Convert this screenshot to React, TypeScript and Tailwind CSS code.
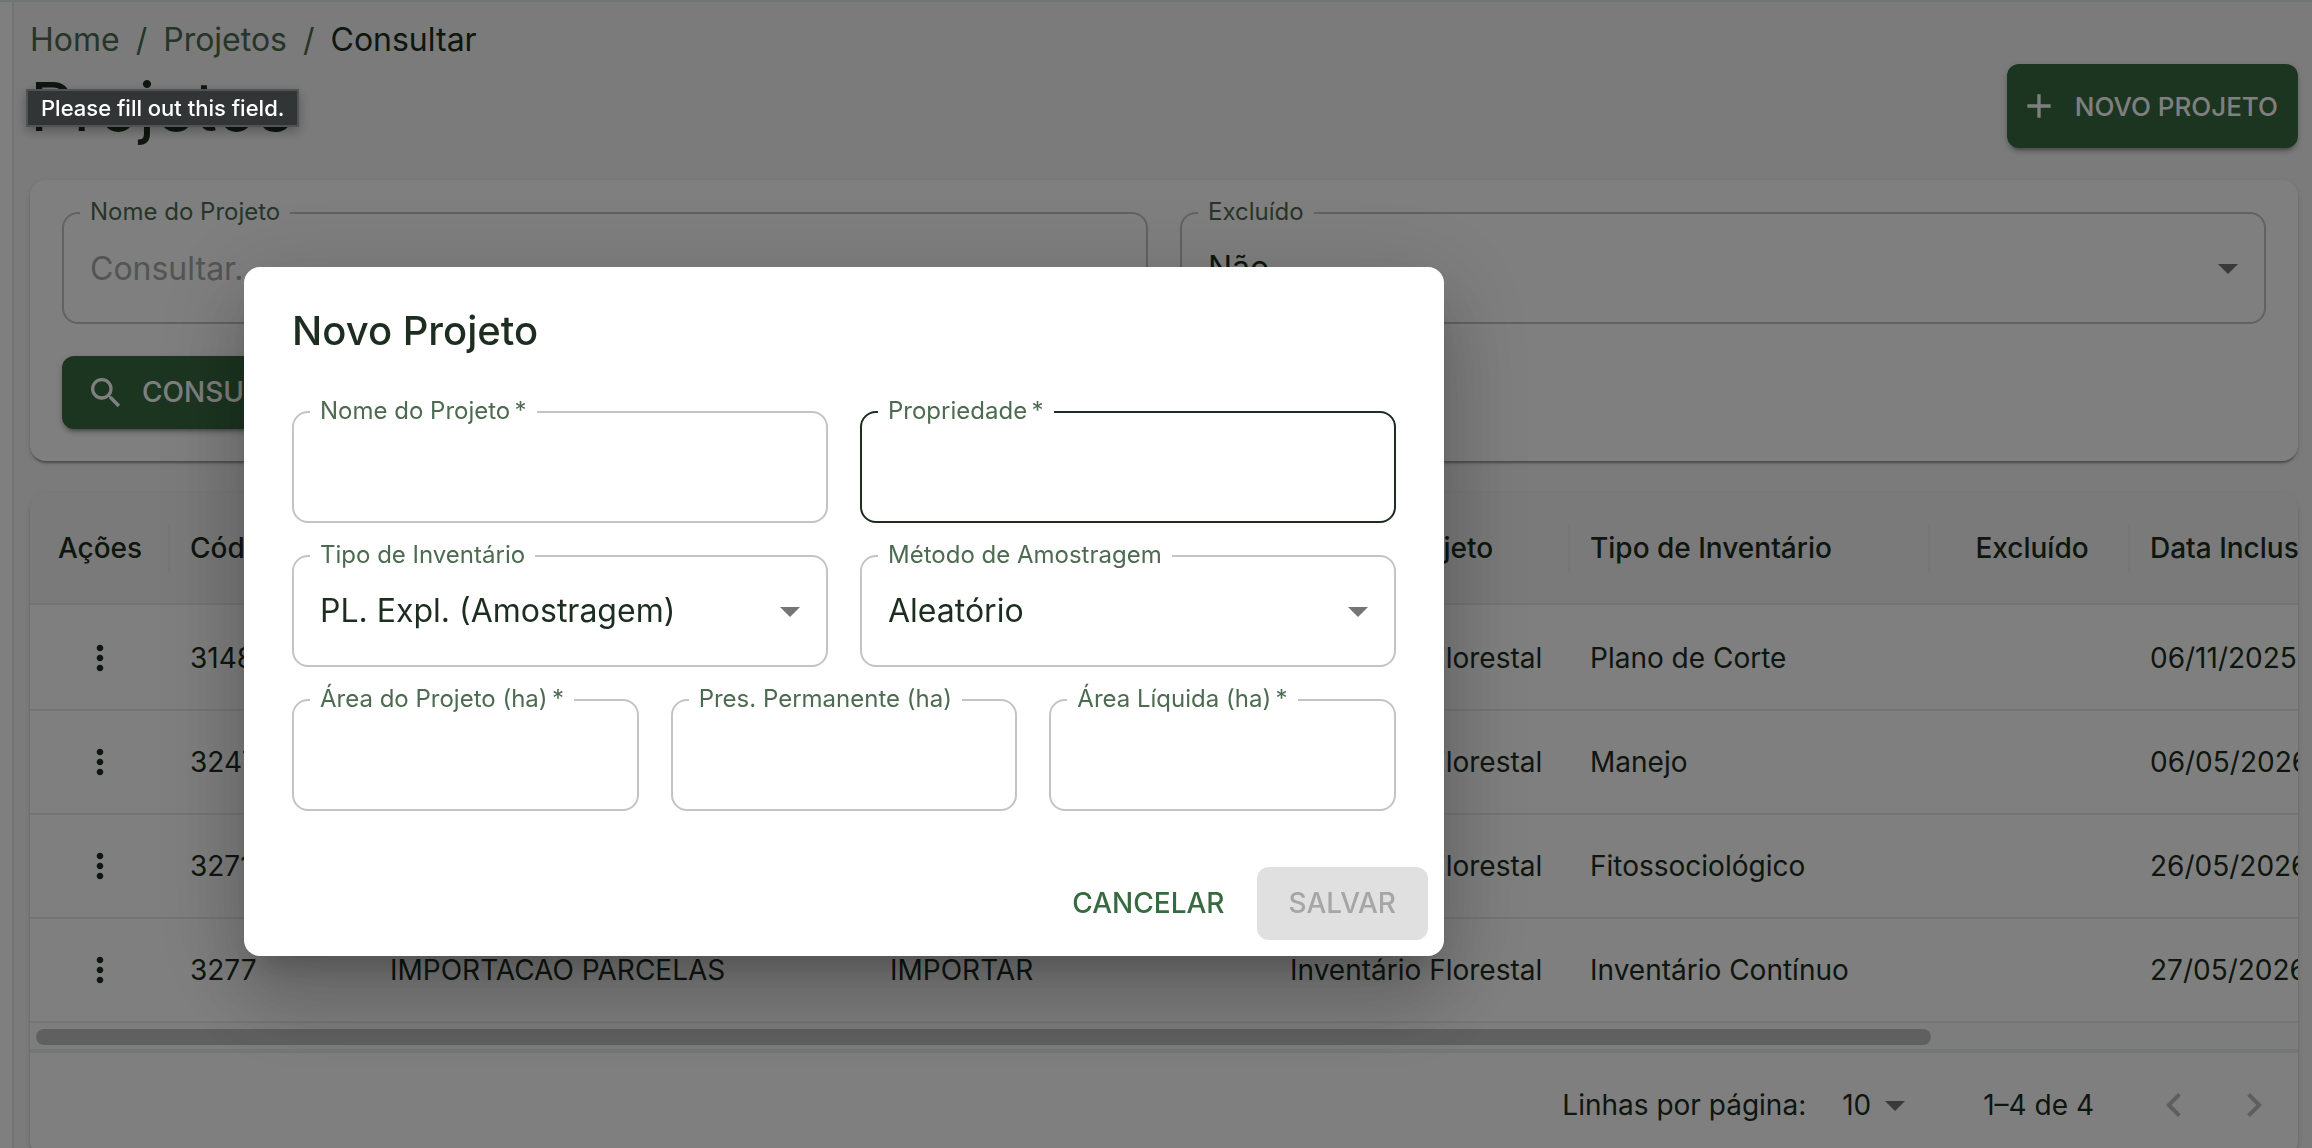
import React, { useState } from 'react';
import {
  MdAdd,
  MdArrowDropDown,
  MdKeyboardArrowLeft,
  MdKeyboardArrowRight,
  MdMoreVert,
  MdSearch,
} from 'react-icons/md';

interface Project {
  code: string;
  name: string;
  property: string;
  kind: string;
  inventory: string;
  createdAt: string;
}

const PROJECTS: Project[] = [
  { code: '3148', name: '', property: '', kind: 'Inventário Florestal', inventory: 'Plano de Corte', createdAt: '06/11/2025' },
  { code: '3247', name: '', property: '', kind: 'Inventário Florestal', inventory: 'Manejo', createdAt: '06/05/2026' },
  { code: '3271', name: '', property: '', kind: 'Inventário Florestal', inventory: 'Fitossociológico', createdAt: '26/05/2026' },
  { code: '3277', name: 'IMPORTACAO PARCELAS', property: 'IMPORTAR', kind: 'Inventário Florestal', inventory: 'Inventário Contínuo', createdAt: '27/05/2026' },
];

const COLUMNS = [
  { title: 'Ações', width: 'w-[140px]', align: 'px-5 text-center' },
  { title: 'Código', width: 'w-[200px]', align: 'px-5 text-left' },
  { title: 'Nome', width: 'w-[500px]', align: 'px-5 text-left' },
  { title: 'Propriedade', width: 'w-[400px]', align: 'px-5 text-left' },
  { title: 'Tipo de Projeto', width: 'w-[300px]', align: 'px-5 text-left' },
  { title: 'Tipo de Inventário', width: 'w-[360px]', align: 'px-5 text-left' },
  { title: 'Excluído', width: 'w-[200px]', align: 'pr-5 pl-6 text-center' },
  { title: 'Data Inclusão', width: 'w-[600px]', align: 'px-5 text-left' },
];

const BUTTON = 'flex items-center justify-center rounded-xl font-medium uppercase';
const PRIMARY =
  'bg-[#386a42] text-white shadow-[0_6px_2px_-4px_rgba(0,0,0,0.2),0_4px_4px_rgba(0,0,0,0.14),0_2px_10px_rgba(0,0,0,0.12)]';
const CARD =
  'rounded-2xl bg-white shadow-[0_4px_2px_-2px_rgba(0,0,0,0.2),0_2px_2px_rgba(0,0,0,0.14),0_2px_6px_rgba(0,0,0,0.12)]';

interface FieldProps {
  id: string;
  label: string;
  required?: boolean;
  active?: boolean;
  children: React.ReactNode;
}

// Outlined field: the legend cuts the notch in the border
function Field({ id, label, required, active, children }: FieldProps) {
  return (
    <fieldset
      className={`-mt-3 min-w-0 rounded-2xl border-2 ${active ? 'border-[#1d2d20]' : 'border-[#c4c4c4]'}`}
    >
      <legend className="ml-4 px-2.5 pb-0.5 text-2xl leading-6 text-[#4d6b51]">
        <label htmlFor={id}>
          {label}
          {required && <span>&thinsp;*</span>}
        </label>
      </legend>
      <div className="relative mb-3 h-[84px]">{children}</div>
    </fieldset>
  );
}

interface TextFieldProps {
  id: string;
  label: string;
  required?: boolean;
  active?: boolean;
  placeholder?: string;
}

function TextField({ id, label, required, active, placeholder }: TextFieldProps) {
  const [value, setValue] = useState('');

  return (
    <Field id={id} label={label} required={required} active={active}>
      <input
        id={id}
        type="text"
        required={required}
        value={value}
        onChange={(e) => setValue(e.target.value)}
        placeholder={placeholder}
        className="h-full w-full bg-transparent px-[26px] text-[32px] outline-none placeholder:text-[#a5aba6]"
      />
    </Field>
  );
}

interface SelectFieldProps {
  id: string;
  label: string;
  options: string[];
}

function SelectField({ id, label, options }: SelectFieldProps) {
  return (
    <Field id={id} label={label}>
      <select
        id={id}
        className="h-full w-full appearance-none bg-transparent pr-16 pl-[26px] text-[32px] outline-none"
      >
        {options.map((o) => (
          <option key={o}>{o}</option>
        ))}
      </select>
      <MdArrowDropDown className="pointer-events-none absolute top-[18px] right-3 size-12 text-[#757575]" />
    </Field>
  );
}

function Header() {
  return (
    <header>
      <nav className="flex gap-4 text-[32px] leading-[48px] text-[#4d6b51]">
        <a href="#home">Home</a>
        <span>/</span>
        <a href="#projetos">Projetos</a>
        <span>/</span>
        <span className="text-[#1d2d20]">Consultar</span>
      </nav>
      <div className="flex justify-between">
        <h1 className="text-[68px] leading-[84px] font-normal">Projetos</h1>
        <button type="button" className={`${BUTTON} ${PRIMARY} gap-4 pr-5 pl-3 text-[26px]`}>
          <MdAdd className="size-10" />
          Novo Projeto
        </button>
      </div>
    </header>
  );
}

function Filters() {
  return (
    <section className={`${CARD} p-8`}>
      <div className="grid grid-cols-2 gap-8">
        <TextField id="filter-name" label="Nome do Projeto" placeholder="Consultar..." />
        <SelectField id="filter-deleted" label="Excluído" options={['Não', 'Sim']} />
      </div>
      <button
        type="button"
        className={`${BUTTON} ${PRIMARY} mt-8 gap-4 px-6 py-3 text-[28px] leading-[49px]`}
      >
        <MdSearch className="size-10" />
        Consultar
      </button>
    </section>
  );
}

function ProjectTable() {
  return (
    <section className={`${CARD} overflow-hidden text-[28px] leading-10`}>
      <div className="overflow-hidden">
        <table className="w-[2700px] table-fixed border-separate border-spacing-0">
          <thead className="bg-[#f5f5f5]">
            <tr>
              {COLUMNS.map((col) => (
                <th
                  key={col.title}
                  className={`${col.width} ${col.align} relative h-28 border-b-2 border-[#e4ebe8] font-medium`}
                >
                  {col.title}
                  <span className="absolute top-8 right-0 h-12 w-0.5 bg-[#e9eeeb]" />
                </th>
              ))}
            </tr>
          </thead>
          <tbody className="[&_td]:h-[104px] [&_td]:border-t-2 [&_td]:border-[#e4ebe8] [&_td]:px-5 [&>tr:first-child>td]:border-transparent">
            {PROJECTS.map((p) => (
              <tr key={p.code}>
                <td>
                  <button type="button" aria-label="Ações" className="mx-auto flex">
                    <MdMoreVert className="size-10" />
                  </button>
                </td>
                <td>{p.code}</td>
                <td>{p.name}</td>
                <td>{p.property}</td>
                <td>{p.kind}</td>
                <td>{p.inventory}</td>
                <td />
                <td>{p.createdAt}</td>
              </tr>
            ))}
          </tbody>
        </table>
      </div>

      {/* Scrollbar */}
      <div className="border-t-2 border-[#e9eeeb] bg-[#fafafa] px-1.5 pt-1.5 pb-1">
        <div className="h-4 w-[84%] rounded-full bg-[#c1c1c1]" />
      </div>

      <footer className="flex h-[108px] items-center justify-end border-t-4 border-[#e9eeeb] pr-1">
        <label htmlFor="page-size">Linhas por página:</label>
        <div className="relative mr-16 ml-9">
          <select id="page-size" className="w-[77px] appearance-none bg-transparent outline-none">
            <option>10</option>
            <option>25</option>
          </select>
          <MdArrowDropDown className="pointer-events-none absolute -top-1 right-0 size-12 text-[#757575]" />
        </div>
        <span className="mr-10">1–4 de 4</span>
        <button type="button" aria-label="Página anterior" disabled className="p-4 text-[#bdbdbd]">
          <MdKeyboardArrowLeft className="size-12" />
        </button>
        <button type="button" aria-label="Próxima página" disabled className="p-4 text-[#bdbdbd]">
          <MdKeyboardArrowRight className="size-12" />
        </button>
      </footer>
    </section>
  );
}

function NewProjectDialog() {
  return (
    <form
      role="dialog"
      aria-labelledby="dialog-title"
      className="w-full max-w-[1200px] rounded-2xl bg-white shadow-[0_22px_30px_-14px_rgba(0,0,0,0.2),0_48px_76px_6px_rgba(0,0,0,0.14),0_18px_92px_16px_rgba(0,0,0,0.12)]"
    >
      <h2 id="dialog-title" className="px-12 py-8 text-[40px] leading-[64px] font-medium">
        Novo Projeto
      </h2>
      <div className="flex flex-col gap-8 px-12 pt-4 pb-10">
        <div className="grid grid-cols-2 gap-8">
          <TextField id="name" label="Nome do Projeto" required />
          <TextField id="property" label="Propriedade" required active />
        </div>
        <div className="grid grid-cols-2 gap-8">
          <SelectField id="inventory" label="Tipo de Inventário" options={['PL. Expl. (Amostragem)']} />
          <SelectField id="method" label="Método de Amostragem" options={['Aleatório']} />
        </div>
        <div className="grid grid-cols-3 gap-8">
          <TextField id="area" label="Área do Projeto (ha)" required />
          <TextField id="preserved" label="Pres. Permanente (ha)" />
          <TextField id="net-area" label="Área Líquida (ha)" required />
        </div>
      </div>
      <div className="flex justify-end gap-4 p-4 text-[28px] leading-[49px]">
        <button type="button" className={`${BUTTON} px-4 py-3 text-[#386a42]`}>
          Cancelar
        </button>
        <button type="submit" disabled className={`${BUTTON} bg-[#e0e0e0] px-8 py-3 text-[#a6a6a6]`}>
          Salvar
        </button>
      </div>
    </form>
  );
}

export default function App() {
  return (
    <div className="h-screen overflow-hidden bg-[#f7f7f7] font-['Inter',sans-serif] text-[#1d2d20]">
      <div className="flex border-t-2 border-[#dcebe6]">
        <aside className="min-h-screen w-3.5 shrink-0 border-r-2 border-[#dcebe6] bg-white" />
        <main className="flex min-w-0 flex-1 flex-col gap-8 pt-3.5 pr-3.5 pl-4">
          <Header />
          <Filters />
          <ProjectTable />
        </main>
      </div>

      {/* Backdrop */}
      <div className="fixed inset-0 bg-black/50 pt-[267px] pl-[244px]">
        <NewProjectDialog />
      </div>

      {/* Validation tooltip */}
      <div
        role="tooltip"
        className="fixed top-[89px] left-[26px] border-2 border-[#505354] bg-[#313536] px-[13px] text-[22px] leading-[34px] font-medium text-white shadow-[0_4px_12px_rgba(0,0,0,0.3)]"
      >
        Please fill out this field.
      </div>
    </div>
  );
}
